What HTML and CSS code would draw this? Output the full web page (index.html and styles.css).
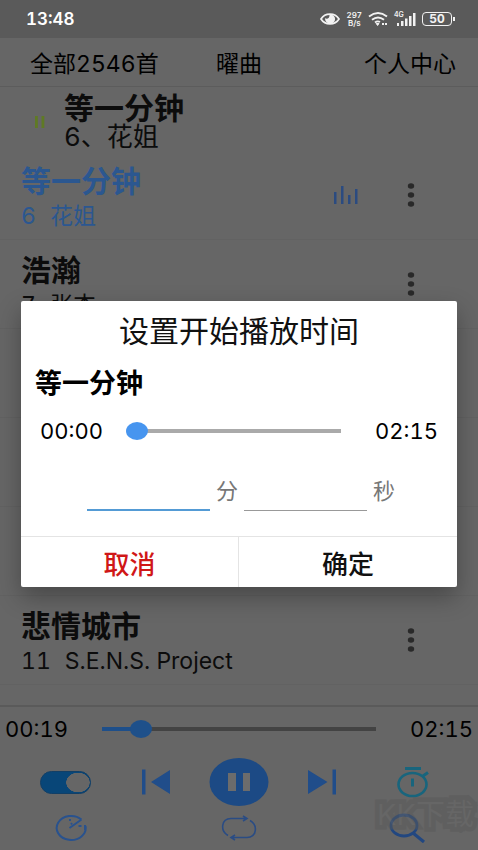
FILE: index.html
```html
<!DOCTYPE html>
<html lang="zh-CN">
<head>
<meta charset="utf-8">
<meta name="viewport" content="width=device-width, initial-scale=1">
<title>音乐播放器</title>
<link rel="stylesheet" href="styles.css">
</head>
<body>
<div class="status">
  <span class="clock">13:48</span>
  <div class="indicators">
    <svg width="20" height="14" viewBox="0 0 20 14"><path d="M1 7C5 0.500 15 0.500 19 7C15 13.500 5 13.500 1 7Z" fill="none" stroke="#f2f2f2" stroke-width="1.700"/><path d="M9.500 2.500a5 4.600 0 1 1-4.300 3.600c1.500 1.600 4.800.2 4.300-3.600z" fill="#f2f2f2"/></svg>
    <span class="speed"><span>297</span><span>B/s</span></span>
    <svg width="20" height="14" viewBox="0 0 20 14" fill="none" stroke="#f2f2f2" stroke-width="1.900"><path d="M1 4.500Q10-2.500 19 4.500M4 7.800Q10 3 16 7.800M7 10.500Q9.500 8.500 12 10"/><path d="M8.200 11.500h2.800l-1.400 2z" fill="#f2f2f2" stroke-width="1"/><path d="M14 12h2M17 12h2" stroke-width="2"/></svg>
    <div class="cell"><span>4G</span><svg width="22" height="14" viewBox="0 0 22 14" fill="#f2f2f2"><path d="M3 11h2v3H3zM7 9h2.500v5H7zM11 6.500h2.500V14H11zM15 4h2.500v10H15zM19 1h2.500v13H19z"/></svg></div>
    <span class="battery">50</span>
  </div>
</div>
<header class="top">
  <a href="#all">全部2546首</a>
  <a href="#artist">曜曲</a>
  <a href="#me">个人中心</a>
</header>
<main class="list">
  <section class="current">
    <svg width="12" height="14" viewBox="0 0 12 14" fill="#5f7a24"><path d="M1 1h2.800v12H1zM7.500 1h2.800v12h-2.800z"/></svg>
    <div>
      <h2 class="song">等一分钟</h2>
      <p class="by">6、花姐</p>
    </div>
  </section>
  <ul class="songs">
    <li class="playing">
      <div class="info"><h3 class="song">等一分钟</h3><p class="artist"><span>6</span><span>花姐</span></p></div>
      <svg class="bars" width="24" height="18" viewBox="0 0 24 18" fill="#2b4b80"><path d="M0 6h2.500v12H0zM7 0h2.500v18H7zM14 9h2.500v9H14zM21 3h2.500v15H21z"/></svg>
      <button class="more" aria-label="更多"><svg width="8" height="24" viewBox="0 0 8 24"><ellipse cx="4" cy="3" rx="3.200" ry="2.800"/><ellipse cx="4" cy="12" rx="3.200" ry="2.800"/><ellipse cx="4" cy="21" rx="3.200" ry="2.800"/></svg></button>
    </li>
    <li>
      <div class="info"><h3 class="song">浩瀚</h3><p class="artist"><span>7</span><span>张杰</span></p></div>
      <button class="more" aria-label="更多"><svg width="8" height="24" viewBox="0 0 8 24"><ellipse cx="4" cy="3" rx="3.200" ry="2.800"/><ellipse cx="4" cy="12" rx="3.200" ry="2.800"/><ellipse cx="4" cy="21" rx="3.200" ry="2.800"/></svg></button>
    </li>
    <li></li>
    <li></li>
    <li></li>
    <li>
      <div class="info"><h3 class="song">悲情城市</h3><p class="artist"><span>11</span><span>S.E.N.S. Project</span></p></div>
      <button class="more" aria-label="更多"><svg width="8" height="24" viewBox="0 0 8 24"><ellipse cx="4" cy="3" rx="3.200" ry="2.800"/><ellipse cx="4" cy="12" rx="3.200" ry="2.800"/><ellipse cx="4" cy="21" rx="3.200" ry="2.800"/></svg></button>
    </li>
  </ul>
</main>
<footer class="player">
  <div class="progress">
    <span class="time">00:19</span>
    <input class="seek seek-player" type="range" min="0" max="135" value="19" aria-label="播放进度">
    <span class="time">02:15</span>
  </div>
  <div class="controls">
    <label class="switch"><input type="checkbox" checked aria-label="开关"></label>
    <button aria-label="上一首"><svg width="30" height="28" viewBox="0 0 30 28" fill="#204d8a"><path d="M1 1.500h3.500v25H1zM29 2v24L10 14z"/></svg></button>
    <button aria-label="暂停"><svg width="60" height="48" viewBox="0 0 60 48"><ellipse cx="30" cy="24" rx="29.500" ry="24" fill="#1c4a85"/><path d="M19 15h8v18h-8zM34 15h7v18h-7z" fill="#6c6c6c"/></svg></button>
    <button aria-label="下一首"><svg width="30" height="28" viewBox="0 0 30 28" fill="#204d8a"><path d="M25.500 1.500H29v25h-3.500zM1 2v24L20.500 14z"/></svg></button>
    <button aria-label="定时"><svg width="34" height="32" viewBox="0 0 34 32" fill="none" stroke="#18657d"><ellipse cx="16.500" cy="18.500" rx="14" ry="11.500" stroke-width="2.600"/><path d="M9 2.500h16" stroke-width="3"/><path d="M27 10l5-3.500" stroke-width="3"/><path d="M16.500 12.500v8" stroke-width="3"/></svg></button>
  </div>
  <div class="tools">
    <button aria-label="倍速"><svg width="34" height="28" viewBox="0 0 34 28" fill="none" stroke="#29528e" stroke-width="2"><path d="M27.500 5.500A14.500 12 0 1 0 31.500 12M15.500 14L27.500 5.500M31 11v5"/><path d="M16 5v2M18 9l-1 1.500M24.500 12h3"/></svg></button>
    <button aria-label="循环"><svg width="36" height="28" viewBox="0 0 36 28" fill="none" stroke="#2a4c84" stroke-width="1.600"><path d="M7 21.500C-1 17 0 4.500 10 4.500H25M22 2l4 2.500L22 7M29 6.500C37 11 36 23.500 26 23.500H11M14 21l-4 2.500 4 2.500"/></svg></button>
    <button aria-label="搜索"><svg width="36" height="30" viewBox="0 0 36 30" fill="none" stroke="#224780"><ellipse cx="15" cy="12.500" rx="13" ry="10.500" stroke-width="2.800"/><path d="M24 20l11 9" stroke-width="3.200"/></svg></button>
  </div>
  <span class="mark">KK下载</span>
</footer>
<div class="overlay">
  <form class="dialog" role="dialog" aria-labelledby="dialog-title">
    <h1 id="dialog-title">设置开始播放时间</h1>
    <h2 class="track-name">等一分钟</h2>
    <div class="range-row">
      <span class="time">00:00</span>
      <input class="seek" type="range" min="0" max="135" value="0" aria-label="开始时间">
      <span class="time">02:15</span>
    </div>
    <div class="fields">
      <input class="focus" id="minutes" type="text" inputmode="numeric"><label for="minutes">分</label>
      <input id="seconds" type="text" inputmode="numeric"><label for="seconds">秒</label>
    </div>
    <div class="actions">
      <button class="cancel" type="button">取消</button>
      <button type="button">确定</button>
    </div>
  </form>
</div>
</body>
</html>
```
FILE: styles.css
```css
* { box-sizing: border-box; margin: 0; padding: 0; }
body {
  min-height: 100vh;
  display: flex;
  flex-direction: column;
  position: relative;
  background: #666;
  color: #0c0c0c;
  font-family: Inter, "Noto Sans CJK SC", sans-serif;
  font-variant-numeric: tabular-nums;
}
button { border: 0; background: none; font: inherit; color: inherit; display: flex; align-items: center; justify-content: center; }
svg { display: block; flex: none; }
a { color: #000; text-decoration: none; }

.status { height: 38px; padding: 0 26px; display: flex; align-items: center; justify-content: space-between; background: #5a5a5a; color: #f2f2f2; }
.clock { font-size: 17px; font-weight: 600; color: #fff; }
.indicators { display: flex; align-items: center; gap: 6px; }
.speed { display: grid; font-size: 8px; line-height: 8px; font-weight: 600; text-align: center; }
.cell { position: relative; }
.cell span { position: absolute; left: 0; top: -1px; font-size: 7px; line-height: 8px; font-weight: 600; }
.battery { position: relative; width: 30px; height: 14px; border: 1px solid #f2f2f2; border-radius: 4px; font-size: 12px; line-height: 12px; font-weight: 700; text-align: center; }
.battery::after { content: ""; position: absolute; right: -4px; top: 4px; width: 2px; height: 4px; background: #f2f2f2; }

.top { height: 49px; padding: 0 22px; display: grid; grid-template-columns: 1fr 1fr 1fr; align-items: center; font-size: 23px; border-bottom: 1px solid #5c5c5c; }
.top a { text-align: center; white-space: nowrap; }
.top a:first-child { text-align: left; padding-left: 8px; }
.top a:last-child { text-align: right; }

.list { flex: 1; }
.current { height: 64px; padding: 6px 34px 0; display: flex; align-items: center; gap: 18px; }
.song { font-size: 30px; line-height: 36px; font-weight: 700; }
.current .song { line-height: 30px; }
.by { font-size: 26px; line-height: 28px; }
.songs { list-style: none; }
.songs li { height: 89px; padding: 0 56px 0 21px; display: flex; align-items: center; border-bottom: 1px solid #626262; }
.info { flex: 1; padding-top: 6px; }
.artist { display: flex; gap: 14px; font-size: 23px; line-height: 34px; white-space: pre; }
.playing { color: #2b5790; }
.bars { margin-right: 42px; }
.more { width: 22px; height: 40px; fill: #292929; }

.player { position: relative; border-top: 2px solid #5a5a5a; padding-bottom: 6px; }
.time { font-size: 22px; line-height: 30px; color: #000; }
.progress { display: flex; align-items: center; justify-content: space-between; gap: 23px; height: 43px; margin-bottom: 8px; padding: 0 5px; }
.seek { --track: #aaa; --thumb: #4795ef; appearance: none; flex: 1; min-width: 0; height: 20px; background: linear-gradient(var(--track), var(--track)) center / calc(100% - 22px) 4px no-repeat; }
.seek::-webkit-slider-thumb { appearance: none; width: 22px; height: 18px; border-radius: 50%; background: var(--thumb); }
.seek-player { --track: linear-gradient(90deg, #1e4f8a 14%, #434343 14%); --thumb: #1e508a; background: var(--track) center / calc(100% - 22px) 4px no-repeat; }
.controls { display: grid; grid-template-columns: 6fr 6fr 5fr 6fr 6fr; padding: 0 20px; height: 48px; place-items: center; }
.tools { display: grid; grid-template-columns: 3fr 7fr 3fr; padding: 0 20px; height: 32px; margin-top: 6px; place-items: center; }
.switch { display: flex; }
.switch input { appearance: none; width: 51px; height: 23px; border-radius: 12px; border: 1px solid #123f66; background: radial-gradient(ellipse 12px 10px at 37px 50%, #666 96%, transparent) #084678; }
.mark { position: absolute; right: 4px; bottom: 18px; font-size: 29px; line-height: 34px; color: #666; -webkit-text-stroke: 9px #595959; paint-order: stroke fill; stroke-linejoin: round; opacity: .5; pointer-events: none; }

.overlay { position: absolute; inset: 38px 0 0; padding: 0 21px; display: flex; align-items: center; }
.dialog { width: 100%; background: #fff; border-radius: 2px; box-shadow: 0 10px 24px rgba(0, 0, 0, .3); }
.dialog h1 { padding-top: 10px; font-size: 30px; line-height: 40px; font-weight: 400; text-align: center; color: #111; }
.track-name { padding: 16px 14px 0; font-size: 27px; line-height: 34px; font-weight: 700; color: #000; }
.range-row { display: flex; align-items: center; gap: 23px; height: 60px; padding: 0 19px; }
.fields { display: flex; justify-content: center; align-items: flex-end; gap: 6px; height: 50px; padding-left: 4px; }
.fields input { width: 123px; height: 40px; border: 0; border-bottom: 1px solid #999; outline: 0; font: inherit; font-size: 22px; background: none; }
.fields .focus { border-bottom: 2px solid #549bd5; }
.fields label { height: 40px; font-size: 22px; line-height: 40px; color: #777; }
.actions { display: grid; grid-template-columns: 1fr 1fr; height: 51px; margin-top: 25px; border-top: 1px solid #e4e4e4; font-size: 26px; font-weight: 500; color: #111; }
.cancel { color: #d01717; border-right: 1px solid #e4e4e4; }
```
